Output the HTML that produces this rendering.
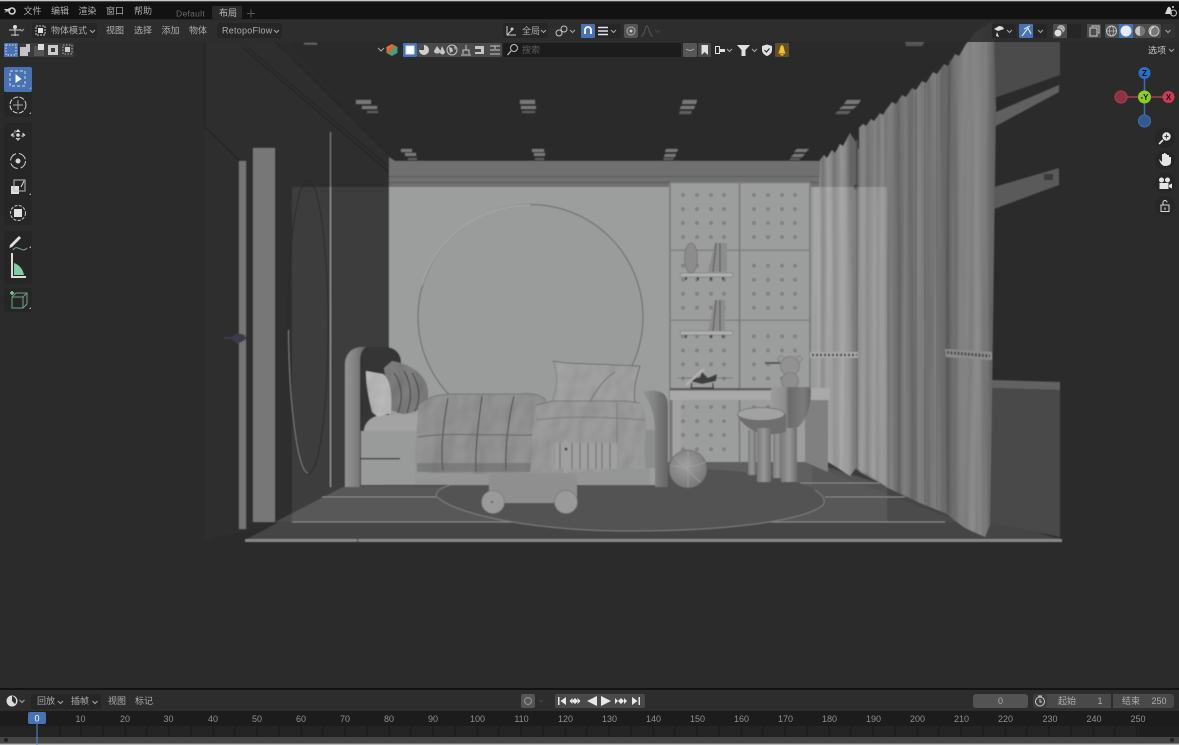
<!DOCTYPE html>
<html lang="zh"><head><meta charset="utf-8"><title>Blender</title>
<style>
html,body{margin:0;padding:0;background:#2b2b2b;overflow:hidden}
svg{display:block}
text{font-family:"Liberation Sans","Noto Sans CJK SC",sans-serif;font-size:9px;fill:#adadad}
.c{fill:none;stroke:#a8a8a8;stroke-width:1}
</style></head><body>
<svg width="1179" height="745" viewBox="0 0 1179 745" xmlns="http://www.w3.org/2000/svg">
<defs>
<filter id="b" x="-5%" y="-5%" width="110%" height="110%"><feGaussianBlur stdDeviation="0.45"/></filter>
<filter id="ib"><feGaussianBlur stdDeviation="0.3"/></filter>
<filter id="wr" x="0" y="0" width="100%" height="100%"><feTurbulence type="fractalNoise" baseFrequency=".05 .035" numOctaves="2" seed="4"/><feDiffuseLighting surfaceScale="2" lighting-color="#fff"><feDistantLight azimuth="225" elevation="60"/></feDiffuseLighting><feComposite in2="SourceGraphic" operator="arithmetic" k1="1.15"/></filter>
<filter id="pl" x="0" y="0" width="100%" height="100%"><feTurbulence type="fractalNoise" baseFrequency=".09 .003" numOctaves="2" seed="7"/><feDiffuseLighting surfaceScale="1.4" lighting-color="#fff"><feDistantLight azimuth="180" elevation="60"/></feDiffuseLighting><feComposite in2="SourceGraphic" operator="arithmetic" k1="1.16"/></filter>
<pattern id="dots" x="676" y="188" width="71" height="70.7" patternUnits="userSpaceOnUse">
<g fill="#8f9090" stroke="#6b6b6b" stroke-width=".7"><circle cx="7" cy="7" r="1.4"/><circle cx="21" cy="7" r="1.4"/><circle cx="35" cy="7" r="1.4"/><circle cx="48" cy="7" r="1.4"/><circle cx="7" cy="21" r="1.4"/><circle cx="21" cy="21" r="1.4"/><circle cx="35" cy="21" r="1.4"/><circle cx="48" cy="21" r="1.4"/><circle cx="7" cy="35" r="1.4"/><circle cx="21" cy="35" r="1.4"/><circle cx="35" cy="35" r="1.4"/><circle cx="48" cy="35" r="1.4"/><circle cx="7" cy="49" r="1.4"/><circle cx="21" cy="49" r="1.4"/><circle cx="35" cy="49" r="1.4"/><circle cx="48" cy="49" r="1.4"/></g></pattern>
<linearGradient id="c1" x1="812" x2="887" y1="0" y2="0" gradientUnits="userSpaceOnUse">
<stop offset="0" stop-color="#7a7a7a"/><stop offset=".05" stop-color="#8c8c8c"/><stop offset=".09" stop-color="#8e8e8e"/><stop offset=".14" stop-color="#6f6f6f"/><stop offset=".2" stop-color="#8f8f8f"/><stop offset=".26" stop-color="#8a8a8a"/><stop offset=".3" stop-color="#727272"/><stop offset=".38" stop-color="#929292"/><stop offset=".45" stop-color="#8a8a8a"/><stop offset=".5" stop-color="#767676"/><stop offset=".55" stop-color="#626262"/><stop offset=".59" stop-color="#5e5e5e"/><stop offset=".64" stop-color="#7f7f7f"/><stop offset=".7" stop-color="#828282"/><stop offset=".75" stop-color="#6f6f6f"/><stop offset=".82" stop-color="#868686"/><stop offset=".88" stop-color="#7a7a7a"/><stop offset=".94" stop-color="#858585"/><stop offset="1" stop-color="#6e6e6e"/>
</linearGradient>
<linearGradient id="c2" x1="885" x2="994" y1="0" y2="0" gradientUnits="userSpaceOnUse">
<stop offset="0" stop-color="#757575"/><stop offset=".06" stop-color="#7d7d7d"/><stop offset=".12" stop-color="#686868"/><stop offset=".18" stop-color="#7b7b7b"/><stop offset=".25" stop-color="#6c6c6c"/><stop offset=".32" stop-color="#7e7e7e"/><stop offset=".4" stop-color="#707070"/><stop offset=".47" stop-color="#7c7c7c"/><stop offset=".53" stop-color="#6a6a6a"/><stop offset=".58" stop-color="#5f5f5f"/><stop offset=".64" stop-color="#757575"/><stop offset=".72" stop-color="#818181"/><stop offset=".84" stop-color="#858585"/><stop offset=".93" stop-color="#7a7a7a"/><stop offset="1" stop-color="#5f5f5f"/>
</linearGradient>
<linearGradient id="post" x1="0" x2="1" y1="0" y2="0"><stop offset="0" stop-color="#929292"/><stop offset=".4" stop-color="#858585"/><stop offset="1" stop-color="#646464"/></linearGradient>
<linearGradient id="leg" x1="0" x2="1" y1="0" y2="0"><stop offset="0" stop-color="#7a7a7a"/><stop offset=".5" stop-color="#979797"/><stop offset="1" stop-color="#6e6e6e"/></linearGradient>
<linearGradient id="bowl" x1="0" x2="1" y1="0" y2="0"><stop offset="0" stop-color="#9c9c9c"/><stop offset=".35" stop-color="#8e8e8e"/><stop offset=".45" stop-color="#6a6a6a"/><stop offset=".8" stop-color="#7c7c7c"/><stop offset="1" stop-color="#666"/></linearGradient>
<radialGradient id="ball" cx=".45" cy=".4" r=".65"><stop offset="0" stop-color="#a0a0a0"/><stop offset="1" stop-color="#747474"/></radialGradient>
<linearGradient id="hex" x1="0" x2="1" y1="0" y2="1"><stop offset="0" stop-color="#e3a230"/><stop offset=".35" stop-color="#d9603a"/><stop offset=".65" stop-color="#3fa874"/><stop offset="1" stop-color="#3b85c4"/></linearGradient>
</defs>
<rect width="1179" height="745" fill="#2b2b2b"/>

<g filter="url(#b)">
<!-- ceiling -->
<polygon points="275,20 990,20 820,161 389,161" fill="#2a2929"/>
<!-- upper left wall -->
<polygon points="205,42 275,42 389,155 389,187 292,187 292,522 205,540" fill="#2f2e2e"/>
<polygon points="205,125 253,148 275,148 275,522 245,522 208,541 205,541" fill="#2d2d2d"/>
<line x1="205" y1="42" x2="205" y2="125" stroke="#272727"/>
<line x1="243" y1="48" x2="389" y2="172" stroke="#222" stroke-width="1"/>
<line x1="247" y1="47" x2="389" y2="167" stroke="#252525" stroke-width="1"/>
<line x1="275" y1="42" x2="389" y2="155" stroke="#272626" stroke-width="1"/>
<line x1="205" y1="127" x2="240" y2="161" stroke="#232323"/>
<!-- wall -->
<polygon points="389,157 395,161 822,161 822,187 389,187" fill="#6f6f6f"/>
<rect x="389" y="176" width="433" height="1" fill="#5b5b5b"/>
<rect x="389" y="182" width="433" height="1" fill="#565656"/>
<rect x="389" y="187" width="430" height="298" fill="#8f9090"/>
<!-- left wall -->
<polygon points="292,187 389,187 389,485 345,487 292,513" fill="#2e2d2e"/>
<rect x="275" y="187" width="17" height="335" fill="#2d2d2d"/>
<!-- floor -->
<polygon points="345,487 668,485 668,462 810,462 1062,540 245,540" fill="#454545"/>
<polygon points="345,486 668,486 668,463 805,463 960,522 275,522" fill="#4c4c4c"/>
<!-- right blocks -->
<polygon points="994,42 1060,42 1060,75 994,98" fill="#4c4c4c"/>
<polygon points="994,106 1035,85 1059,84 994,113" fill="#2a2a2a"/>
<polygon points="994,113 1059,85 1059,92 994,127" fill="#606060"/>
<polygon points="994,187 1059,168 1059,185 994,209" fill="#5a5a5a"/>
<rect x="1044" y="174" width="9" height="6" fill="#3a3a3a"/>
<polygon points="992,380 1060,382 1060,390 992,388" fill="#626262"/>
<polygon points="992,388 1060,390 1060,537 990,522" fill="#4a4a4a"/>
<polygon points="960,530 1060,538 1060,540 990,540" fill="#444"/>
<!-- curtains -->
<polygon filter="url(#pl)" points="820,160 824,155 827,158 832,150 835,153 840,144 843,146 850,133 856,142 859,150 860,465 868,474 887,487 860,472 856,468 850,476 838,468 828,462 818,455 813,400 815,300" fill="url(#c1)"/>
<polygon filter="url(#pl)" points="859,128 863,124 866,126 871,119 874,121 880,113 883,115 887,108 887,487 868,474 860,465" fill="url(#c1)"/>
<polygon filter="url(#pl)" points="886,110 892,102 896,104 902,95 906,97 912,88 916,90 922,81 926,83 933,72 937,74 944,64 948,66 955,54 959,56 966,44 976,32 994,20 996,110 992,400 990,525 985,537 965,528 945,513 920,503 886,487" fill="url(#c2)"/>
<path d="M950,60 C948,200 945,360 948,510" stroke="#555" stroke-width="1" fill="none"/>
<path d="M899,100 V492 M916,92 V498 M925,84 V503 M937,74 V508" stroke="#5c5c5c" stroke-width=".7"/>
<path d="M857,140 V470" stroke="#4d4d4d" stroke-width="2"/>
<rect x="854" y="185" width="4" height="5" fill="#3e3e3e"/>
<!-- overlay -->
<rect x="292" y="187" width="595" height="335" fill="#fff" opacity=".075"/>
<rect x="389" y="187" width="423" height="298" fill="#fff" opacity=".05"/>
<polygon points="813,187 887,187 887,487 868,474 856,468 850,476 828,462 818,455 813,400" fill="#fff" opacity=".13"/>
<!-- door -->
<rect x="253" y="148" width="22" height="374" fill="#777"/>
<rect x="239" y="161" width="7" height="368" fill="#747474"/>
<line x1="330.5" y1="132" x2="330.5" y2="187" stroke="#7c7c7c" stroke-width="1"/>
<line x1="330.5" y1="187" x2="330.5" y2="487" stroke="#a2a2a2" stroke-width="1"/>
<path d="M230,338 L237,333 L245,335 V340 L237,344 Z" fill="#3b3a48"/>
<line x1="224" y1="338" x2="246" y2="338" stroke="#3b3a48" stroke-width="2"/>
<!-- mirror -->
<ellipse cx="308" cy="327" rx="20" ry="147" fill="none" stroke="#2a2a2a" stroke-width="1"/>
<path d="M288.500,330 C289,400 297,472 308,473" fill="none" stroke="#7d7d7d" stroke-width="1"/>
<!-- floor lines -->
<path d="M292,522 H945" stroke="#8c8c8c" stroke-width="1"/>
<path d="M322,497 H436 M825,497 H905 M800,483 H880" stroke="#8c8c8c" stroke-width="1"/>
<rect x="245" y="539" width="817" height="3" fill="#888"/>
<rect x="357" y="539" width="1" height="3" fill="#333"/>
<!-- rug -->
<path d="M436,495 C440,488 446,486 450,485 H668 V468 C720,468 790,474 815,490 C825,497 826,502 822,506 C800,522 720,531 630,531 C540,531 456,515 436,495 Z" fill="#535353"/>
<path d="M450,485 C440,488 436,492 436,496 C456,516 540,531 630,531 C720,531 800,522 822,506 C826,502 825,497 815,490" fill="none" stroke="#7e7e7e" stroke-width="1"/>
<!-- circle -->
<circle cx="530.5" cy="317" r="112.5" fill="#9a9b9b" stroke="#686868" stroke-width="1"/>
<path d="M422,285 A112 112 0 0 1 530,205" fill="none" stroke="#b0b0b0" stroke-width="1"/>
<!-- panels -->
<rect x="670" y="183" width="140" height="279" fill="#9c9d9d"/>
<rect x="670" y="188" width="140" height="274" fill="url(#dots)"/>
<g fill="#808080">
<rect x="669" y="183" width="2" height="279"/><rect x="738.5" y="183" width="2" height="279"/><rect x="809" y="183" width="2" height="279"/>
<rect x="670" y="249.5" width="140" height="1.5"/><rect x="670" y="319.5" width="140" height="1.5"/><rect x="670" y="389" width="140" height="1.5"/>
<rect x="670" y="182" width="140" height="1.5"/></g>
<!-- shelves -->
<rect x="680" y="273" width="53" height="4" rx="2" fill="#b0b0b0" stroke="#6a6a6a" stroke-width=".5"/>
<rect x="685" y="277" width="2" height="3" fill="#444"/><rect x="697" y="277" width="2" height="3" fill="#444"/><rect x="710" y="277" width="2" height="3" fill="#444"/><rect x="722" y="277" width="2" height="3" fill="#444"/>
<rect x="680" y="331" width="53" height="4" rx="2" fill="#b0b0b0" stroke="#6a6a6a" stroke-width=".5"/>
<rect x="685" y="335" width="2" height="3" fill="#444"/><rect x="710" y="335" width="2" height="3" fill="#444"/><rect x="722" y="335" width="2" height="3" fill="#444"/>
<ellipse cx="691" cy="258" rx="6.5" ry="15" fill="#8c8c8c" stroke="#666" stroke-width=".6"/>
<path d="M708,272 L715,243 H727 V272 Z" fill="#8c8c8c"/><path d="M716,243 L713,272 M720,243 V272" stroke="#555"/>
<path d="M708,331 L715,300 H725 V331 Z" fill="#8c8c8c"/><path d="M716,300 L713,331 M720,300 V331" stroke="#555"/>
<!-- desk -->
<rect x="670" y="388" width="160" height="12" fill="#a9a9a9"/>
<rect x="670" y="388" width="102" height="2.500" fill="#5e5e5e"/>
<rect x="670" y="400" width="11" height="62" fill="#a3a3a3"/>
<rect x="670" y="400" width="2.500" height="62" fill="#777"/>
<polygon points="805,400 828,400 828,472 805,462" fill="#808080"/>
<!-- plane -->
<path d="M678,378 H733" stroke="#777" stroke-width="1"/>
<path d="M690,381 L700,377 L702,372 L708,378 L717,374 L716,381 L702,384 Z" fill="#3d3d3d"/>
<path d="M686,385 L697,375 L704,369" stroke="#b2b2b2" stroke-width="2.200" fill="none"/>
<path d="M692,383 L691,388 M713,383 V388 M691,388 H714" stroke="#2f2f2f" stroke-width="1.200" fill="none"/>
<!-- bear -->
<path d="M765,363 H780" stroke="#555" stroke-width="2"/>
<circle cx="781" cy="359" r="3.200" fill="#9a9a9a" stroke="#6a6a6a" stroke-width=".5"/><circle cx="799" cy="359" r="3.200" fill="#9a9a9a" stroke="#6a6a6a" stroke-width=".5"/>
<circle cx="790" cy="366" r="9.500" fill="#929292" stroke="#6e6e6e" stroke-width=".6"/>
<circle cx="790" cy="381" r="8.500" fill="#8e8e8e" stroke="#6e6e6e" stroke-width=".6"/>
<!-- chair -->
<rect x="748" y="430" width="8" height="45" fill="url(#leg)"/><rect x="773" y="430" width="9" height="48" fill="url(#leg)"/>
<path d="M771,389 L773,387 H809 C810,387 811,388 811,392 C811,415 800,427 796,428 V478 L781,482 V432 L771,425 Z" fill="url(#bowl)"/>
<rect x="781" y="428" width="16" height="54" rx="1" fill="url(#leg)"/>
<path d="M738,417 C748,432 765,438 786,432 V414 H738 Z" fill="#6e6e6e"/>
<ellipse cx="761" cy="414" rx="23.500" ry="6.500" fill="#a2a2a2" stroke="#6a6a6a" stroke-width=".7"/>
<rect x="757" y="428" width="14" height="54" rx="1" fill="url(#leg)"/>
<!-- ball -->
<circle cx="688" cy="469" r="19" fill="url(#ball)" stroke="#5e5e5e" stroke-width=".6"/>
<path d="M670,465 Q688,470 706,462 M688,451 V487 M675,458 L700,482" stroke="#a6a6a6" stroke-width=".6" fill="none"/>
<!-- bed -->
<path d="M360,347 H385 C395,347 401,354 401,362 L401,390 L364,432 H360 Z" fill="#343434"/>
<path d="M345,365 C345,354 352,347 362,347 H366 C361,350 360,356 360,362 V487 H345 Z" fill="url(#post)"/>
<rect x="361" y="431" width="60" height="54" fill="#999a9a"/>
<rect x="361" y="458" width="39" height="1.3" fill="#333"/>
<path d="M364,430 C365,422 372,415 385,415 H420 V431 H364 Z" fill="#a3a3a3"/>
<rect x="415" y="468" width="235" height="17" fill="#959696"/>
<path filter="url(#wr)" d="M384,368 L392,361 C415,365 428,378 428,393 C428,406 420,412 403,414 L390,410 Z" fill="#7a7a7a"/>
<path d="M394,373 Q406,390 398,413 M404,371 Q415,390 407,413 M412,373 Q424,392 415,411" stroke="#3f3f3f" stroke-width="1" fill="none"/>
<path filter="url(#wr)" d="M366,371 L383,374 C392,380 392,400 391,413 L378,417 L372,412 C368,395 366,385 366,371 Z" fill="#b4b4b4"/>
<!-- right pillow -->
<path filter="url(#wr)" d="M553,361 L566,363 L640,366 C636,378 633,392 635,402 H552 C556,390 560,378 553,361 Z" fill="#9e9e9e"/>
<path d="M553,361 L566,363 L640,366 C636,378 633,392 635,402" fill="none" stroke="#5f5f5f" stroke-width=".8"/>
<path d="M552,402 C556,390 560,378 553,361" fill="none" stroke="#777" stroke-width=".7"/>
<path d="M590,402 C597,388 605,378 615,372" stroke="#707070" stroke-width="1" fill="none"/>
<!-- foot post -->
<path d="M643,392 C648,390 658,390 664,394 C668,398 668,404 668,410 V487 H655 V430 C655,415 650,402 643,392 Z" fill="url(#post)"/>
<rect x="645" y="430" width="10" height="38" fill="#8c8d8d"/>
<!-- duvet -->
<path filter="url(#wr)" d="M419,405 C425,397 440,394 455,394 L520,394 C535,392 542,396 546,400 L537,465 L530,472 L480,474 L430,473 L416,468 C415,450 417,425 419,405 Z" fill="#8f8f8f"/>
<path d="M448,398 C444,420 440,450 443,470 M482,396 C478,425 475,450 476,472 M514,396 C508,420 505,450 506,470" stroke="#454545" stroke-width="1" fill="none"/>
<path d="M418,437 C450,432 500,436 535,435" stroke="#666" stroke-width="1" fill="none"/>
<path d="M419,405 C425,397 440,394 455,394 L520,394 C535,392 542,396 546,400" fill="none" stroke="#6e6e6e" stroke-width=".8"/>
<rect x="417" y="463" width="120" height="9" fill="#666" opacity=".5"/>
<!-- blanket -->
<path filter="url(#wr)" d="M537,405 L552,401 H625 L640,403 C645,410 646,420 646,428 L644,465 L610,472 H530 C533,450 530,425 537,405 Z" fill="#989898"/>
<path d="M537,405 L552,401 H625 L640,403" fill="none" stroke="#6c6c6c" stroke-width=".8"/>
<path d="M617,403 V445 M537,420 C570,415 620,418 645,420" stroke="#7c7c7c" stroke-width="1" fill="none"/>
<rect x="555" y="443" width="62" height="26" fill="#a0a0a0"/>
<path d="M560,443 V469 M566,443 V469 M572,443 V469 M580,443 V469 M588,443 V469 M596,443 V469 M602,443 V469 M610,443 V469" stroke="#5a5a5a" stroke-width=".8"/>
<rect x="564" y="440" width="4" height="33" fill="#a0a0a0"/>
<circle cx="566" cy="449" r="1.5" fill="#444"/>
<!-- cart -->
<rect x="489" y="473" width="88" height="30" rx="6" fill="#8f8f8f"/>
<circle cx="493" cy="502" r="11.5" fill="#9a9a9a" stroke="#6f6f6f" stroke-width=".6"/>
<circle cx="566" cy="502" r="11.5" fill="#9a9a9a" stroke="#6f6f6f" stroke-width=".6"/>
<circle cx="492" cy="502" r="1" fill="#444"/>
<!-- ties -->
<path d="M810,352 H858 V358 H810 Z" fill="#a8a8a8"/>
<path d="M812,355 H857" stroke="#4a4a4a" stroke-width="2.500" stroke-dasharray="2 2"/>
<path d="M945,349 L992,352 V360 L946,357 Z" fill="#8c8c8c"/>
<path d="M947,352.500 L990,356" stroke="#4a4a4a" stroke-width="3" stroke-dasharray="2 1.500"/>
<!-- ceiling lights -->
<g fill="#787878">
<rect x="356" y="100" width="15" height="4"/><rect x="362" y="106" width="15" height="3"/><rect x="367" y="111" width="11" height="2" fill="#5e5e5e"/>
<rect x="520" y="100" width="15" height="4"/><rect x="521" y="106" width="15" height="3"/><rect x="522" y="111" width="13" height="2" fill="#5e5e5e"/>
<polygon points="683,100 697,100 696,104 682,104"/><polygon points="681,106 695,106 694,109 680,109"/><polygon points="680,111 692,111 691,114 679,114" fill="#5e5e5e"/>
<polygon points="847,100 861,100 858,104 844,104"/><polygon points="843,106 857,106 853,109 839,109"/><polygon points="838,111 851,111 848,114 835,114" fill="#5e5e5e"/>
<rect x="401" y="149" width="11" height="3"/><rect x="405" y="153" width="11" height="3"/><rect x="408" y="158" width="9" height="2" fill="#5e5e5e"/>
<rect x="532" y="149" width="12" height="3"/><rect x="534" y="153" width="11" height="3"/><rect x="535" y="158" width="9" height="2" fill="#5e5e5e"/>
<polygon points="666,149 678,149 677,152 665,152"/><polygon points="665,154 676,154 675,157 664,157"/><polygon points="664,158 674,158 673,160 663,160" fill="#5e5e5e"/>
<polygon points="797,149 809,149 806,152 794,152"/><polygon points="794,154 805,154 802,157 791,157"/><polygon points="791,158 801,158 799,160 789,160" fill="#5e5e5e"/>
<rect x="304" y="43" width="13" height="1.5" fill="#6a6a6a"/>
<polygon points="905,41 925,41 922,46 906,46" fill="#555"/>
</g>
</g>

<!-- header bars -->
<rect x="0" y="0" width="1179" height="19" fill="#121212"/>
<rect x="0" y="0" width="1179" height="1.3" fill="#c8c8c8"/>
<rect x="0" y="19" width="1179" height="1" fill="#262626"/>
<rect x="0" y="20" width="1179" height="22" fill="#2d2d2d" opacity=".88"/>
<rect x="0" y="42" width="78" height="16" fill="#2b2b2b"/>
<rect x="371" y="42" width="422" height="18" fill="#2b2b2b" opacity=".75"/>

<g filter="url(#ib)">
<!-- top menu -->
<rect x="212" y="6" width="30" height="13" rx="2" fill="#2b2b2b"/>
<g fill="#d0d0d0"><circle cx="12" cy="11" r="3" fill="none" stroke="#d0d0d0" stroke-width="1.6"/><path d="M4,13 L9,8 L11,10 L6,12 Z M4,9 L9,9 V10.5 H5 Z"/></g>
<text x="23.5" y="14">文件</text><text x="51" y="14">编辑</text><text x="78.500" y="14">渲染</text><text x="106" y="14">窗口</text><text x="134" y="14">帮助</text>
<text x="176" y="16.500" style="fill:#6b6b6b;font-size:8.500px;letter-spacing:.3px">Default</text>
<text x="219" y="16" style="fill:#bdbdbd">布局</text>
<path d="M247,13.500 H255 M251,9.500 V17.500" stroke="#555" stroke-width="1"/>
<!-- top right -->
<path d="M1167,9 C1168,6 1170,6 1171,9 L1172,14 H1165 Z" fill="#d8d8d8"/><circle cx="1173" cy="7" r="1" fill="#d8d8d8"/><circle cx="1173.500" cy="13" r="3" fill="none" stroke="#bbb"/>

<!-- row 2 left -->
<g stroke="#d0d0d0" fill="none" stroke-width="1"><path d="M9,30 H21 M15,26 V36 M11,35 H19"/></g><circle cx="15" cy="27" r="2" fill="#ddd"/>
<path class="c" d="M20,29 l2,2 l2,-2"/>
<rect x="32" y="23" width="65" height="15" rx="2" fill="#282828"/>
<rect x="36" y="26" width="9" height="9" fill="none" stroke="#c8c8c8" stroke-dasharray="2 1"/><rect x="38" y="28" width="5" height="5" fill="#ddd"/>
<text x="51" y="33.500">物体模式</text><path class="c" d="M90,30 l2.500,2.500 l2.500,-2.500"/>
<text x="106" y="33.500">视图</text><text x="134" y="33.500">选择</text><text x="161.500" y="33.500">添加</text><text x="189" y="33.500">物体</text>
<rect x="217" y="23" width="65" height="15" rx="2" fill="#282828"/>
<text x="222" y="33.500" style="letter-spacing:.25px;font-size:9px">RetopoFlow</text><path class="c" d="M274,30 l2.500,2.500 l2.500,-2.500"/>

<!-- select modes -->
<rect x="4" y="43" width="14" height="14" fill="#4772b3"/><rect x="6" y="45" width="10" height="10" fill="none" stroke="#e6e6e6" stroke-dasharray="1.5 1.5"/>
<rect x="19" y="43" width="55" height="14" rx="1" fill="#3a3a3a"/>
<path d="M20,47 h6 v-3 h4 v8 h-2 v4 h-8 z" fill="#c4c4c4"/>
<path d="M34,46 h6 v4 h4 v6 h-10 z" fill="#555"/><rect x="38" y="44" width="6" height="6" fill="#ddd"/>
<rect x="48" y="45" width="10" height="10" fill="#ccc"/><rect x="51" y="48" width="4" height="4" fill="#3a3a3a"/>
<rect x="63" y="45" width="9" height="9" fill="none" stroke="#aaa" stroke-dasharray="1.500 1.500"/><rect x="65" y="47" width="5" height="5" fill="#ccc"/>

<!-- row 2 center -->
<rect x="503" y="23" width="45" height="15" rx="2" fill="#252525"/>
<path d="M507,26 V35 H516 M507,35 L513,29" stroke="#ccc" fill="none"/><circle cx="512" cy="29" r="1.5" fill="#ccc"/>
<text x="522" y="34">全局</text><path class="c" d="M541,30 l2.500,2.500 l2.500,-2.500"/>
<circle cx="559" cy="33" r="3" fill="none" stroke="#c5c5c5"/><circle cx="564" cy="29" r="3" fill="none" stroke="#c5c5c5"/><path class="c" d="M570,30 l2.500,2.500 l2.500,-2.500"/>
<rect x="581" y="24" width="14" height="14" rx="1" fill="#4772b3"/>
<path d="M585,34 V30 a3,3 0 0 1 6,0 V34" fill="none" stroke="#eee" stroke-width="2"/>
<rect x="596" y="24" width="25" height="14" fill="#252525"/>
<path d="M598,27.500 H608 M598,31 H608 M598,34.500 H608" stroke="#e6e6e6" stroke-width="1.500"/><path class="c" d="M611,30 l2.500,2.500 l2.500,-2.500"/>
<rect x="624" y="24" width="14" height="14" rx="2" fill="#555"/><circle cx="631" cy="31" r="4" fill="none" stroke="#aaa"/><circle cx="631" cy="31" r="1.500" fill="#ccc"/>
<path d="M641,36 C645,36 645,26 647,26 C649,26 649,36 653,36" fill="none" stroke="#555"/><path d="M655,30 l2.500,2.500 l2.500,-2.500" fill="none" stroke="#444"/>

<!-- row 3 center -->
<path class="c" d="M378,48 l3,3 l3,-3"/>
<polygon points="392,44 397.500,47 397.500,53 392,56 386.500,53 386.500,47" fill="url(#hex)"/>
<rect x="403" y="43" width="14" height="14" rx="1" fill="#4772b3"/><rect x="406" y="46" width="8" height="8" fill="#fff" stroke="#dfe8f5"/>
<rect x="417" y="43" width="85" height="14" rx="2" fill="#4a4a4a"/>
<circle cx="424" cy="50" r="5" fill="#cfcfcf"/><path d="M424,50 V45 A5,5 0 0 0 419,50 Z" fill="#4a4a4a"/>
<path d="M437,46 L440,50 C442,54 434,55 434,51 Z M442,46 L445,52 A2.500,2.500 0 0 1 440,52" fill="#c5c5c5"/>
<circle cx="452" cy="50" r="5" fill="none" stroke="#c5c5c5"/><path d="M449,47 l3,1 l1,3 l-3,2 z M454,46 l2,2 l-1,2 z" fill="#c5c5c5"/>
<path d="M463,54 V50 H469 V54 M466,50 V45 M461,55 H471" stroke="#c5c5c5" fill="none"/>
<path d="M475,46 H484 V54 H475 Z" fill="#c5c5c5"/><rect x="475" y="49" width="6" height="3" fill="#4a4a4a"/>
<path d="M490,46 H500 M495,46 V49 M490,50 H500 M490,54 H500" stroke="#c5c5c5" fill="none"/>
<rect x="503" y="43" width="178" height="14" rx="2" fill="#1c1c1c"/>
<circle cx="514" cy="48" r="3.500" fill="none" stroke="#c0c0c0"/><path d="M511,51 L507.500,55" stroke="#c0c0c0" stroke-width="1.300"/>
<text x="522" y="53" style="fill:#5c5c5c">搜索</text>
<rect x="683" y="43" width="14" height="14" rx="1" fill="#575757"/><path d="M686,49 q4,3 8,0" fill="none" stroke="#aaa"/>
<rect x="698" y="43" width="13" height="14" rx="1" fill="#474747"/><path d="M701.500,45 H708 V55 L704.700,52 L701.500,55 Z" fill="#e0e0e0"/>
<path d="M715,46 H720 V49 H725 V52 H720 V54 H715 Z" fill="#e0e0e0"/><rect x="716" y="47" width="3" height="6" fill="#2b2b2b"/>
<path class="c" d="M727,49 l2.500,2.500 l2.500,-2.500"/>
<polygon points="737,45 750,45 745.500,50 745.500,56 741.500,56 741.500,50" fill="#e0e0e0"/>
<path class="c" d="M752,49 l2.500,2.500 l2.500,-2.500"/>
<path d="M762,46 L767,44.500 L772,46 V50 C772,53 769,55.500 767,56 C765,55.500 762,53 762,50 Z" fill="#e0e0e0"/><path d="M764.500,50 l2,2 l3,-3.500" fill="none" stroke="#2b2b2b" stroke-width="1.200"/>
<rect x="775" y="43" width="14" height="14" rx="1" fill="#5e4f2c"/>
<path d="M778,53.500 C780,52 779.500,45.500 782,45 C784.500,45.500 784,52 786,53.500 Z" fill="#f6c026"/><rect x="780.500" y="54" width="3" height="1.500" fill="#f6c026"/>

<!-- right tools -->
<rect x="992" y="24" width="24" height="14" fill="#252525"/>
<path d="M994,29 l5,-3 q4,0 5,3 l-6,2 z" fill="#dedede"/><path d="M997,32 l2,5 l-3,-1 z" fill="#dedede"/>
<path class="c" d="M1007,30 l2.500,2.500 l2.500,-2.500"/>
<rect x="1019" y="24" width="14" height="14" rx="1" fill="#4772b3"/><path d="M1022,36 L1028,28 L1031,34 M1024,29 L1030,26" fill="none" stroke="#e2e8f2" stroke-width="1.100"/>
<rect x="1034" y="24" width="13" height="14" fill="#252525"/><path class="c" d="M1038,30 l2.500,2.500 l2.500,-2.500"/>
<rect x="1053" y="24" width="14" height="14" rx="1" fill="#4d4d4d"/><circle cx="1061" cy="29" r="4" fill="#aaa"/><circle cx="1058" cy="33" r="4" fill="#ddd" stroke="#4d4d4d"/>
<rect x="1067" y="24" width="14" height="14" fill="#282828"/>
<rect x="1087" y="24" width="14" height="14" rx="1" fill="#4d4d4d"/><rect x="1090" y="28" width="7" height="8" fill="none" stroke="#ccc"/><path d="M1092,27 V26 H1099 V33 H1098" fill="none" stroke="#ccc"/>
<rect x="1105" y="24" width="56" height="14" rx="2" fill="#4d4d4d"/>
<circle cx="1111.500" cy="31" r="5" fill="none" stroke="#c5c5c5"/><ellipse cx="1111.500" cy="31" rx="2" ry="5" fill="none" stroke="#c5c5c5" stroke-width=".7"/><path d="M1106.500,31 H1116.500" stroke="#c5c5c5" stroke-width=".7"/>
<rect x="1119" y="24" width="14" height="14" fill="#4772b3"/><circle cx="1126" cy="31" r="5.500" fill="#e5ecf8"/>
<circle cx="1140" cy="31" r="5" fill="#c5c5c5"/><path d="M1140,26 A5,5 0 0 1 1140,36 Z" fill="#777"/>
<circle cx="1154" cy="31" r="5" fill="#777" stroke="#c5c5c5"/><path d="M1151,34 A5,5 0 0 1 1154,27" fill="none" stroke="#ddd"/>
<rect x="1162" y="24" width="13" height="14" rx="2" fill="#333"/><path class="c" d="M1165.500,30 l2.500,2.500 l2.500,-2.500"/>
<rect x="1143" y="43" width="35" height="14" rx="2" fill="#2a2a2a"/>
<text x="1148" y="53.500" style="fill:#c4c4c4">选项</text><path class="c" d="M1169,49 l2.500,2.500 l2.500,-2.500"/>

<!-- gizmo -->
<path d="M1144.500,73 V121" stroke="#3e6ea8" stroke-width="1.500"/><path d="M1121,97 H1168" stroke="#a83d50" stroke-width="1.500"/>
<circle cx="1144.500" cy="73" r="6" fill="#2b70c6"/><text x="1144.500" y="76" text-anchor="middle" style="fill:#111;font-size:8px;font-weight:bold">Z</text>
<circle cx="1121" cy="97" r="6" fill="#8d3344" stroke="#b53c52"/>
<circle cx="1144.500" cy="121" r="6" fill="#305a90" stroke="#3e70b0"/>
<circle cx="1168.500" cy="97" r="6" fill="#d03a53"/><text x="1168.500" y="100" text-anchor="middle" style="fill:#111;font-size:8px;font-weight:bold">X</text>
<circle cx="1144.500" cy="97" r="6.500" fill="#8ccf1d"/><text x="1144.500" y="100" text-anchor="middle" style="fill:#111;font-size:8px;font-weight:bold">-Y</text>
<!-- nav -->
<g fill="#252525"><circle cx="1165" cy="138" r="10"/><circle cx="1165" cy="160" r="10"/><circle cx="1165" cy="183" r="10"/><circle cx="1165" cy="206" r="10"/></g>
<circle cx="1166.500" cy="136.500" r="4.200" fill="#e0e0e0"/><path d="M1163,140 L1159,144" stroke="#e0e0e0" stroke-width="1.800"/><path d="M1164.500,136.500 H1168.500 M1166.500,134.500 V138.500" stroke="#333"/>
<path d="M1159,159 L1162,162 V154 H1164 V153 H1165.500 V154 H1167 V155 H1169 V157 H1171 V162 C1171,165 1168,166 1165,166 C1162,166 1160,163 1159,159 Z" fill="#e4e4e4"/>
<circle cx="1161.500" cy="180" r="2.500" fill="#e4e4e4"/><circle cx="1167.500" cy="180" r="2.500" fill="#e4e4e4"/><rect x="1159.500" y="183" width="9" height="6" fill="#e4e4e4"/><path d="M1169,185 L1172,183.500 V188.500 L1169,187 Z" fill="#e4e4e4"/>
<rect x="1161" y="205" width="8" height="6.500" fill="none" stroke="#dcdcdc"/><path d="M1163,205 V202.500 a2,2 0 0 1 4,0" fill="none" stroke="#dcdcdc"/><rect x="1164.500" y="207.500" width="1" height="2.500" fill="#dcdcdc"/>

<!-- left toolbar -->
<rect x="4" y="67" width="28" height="25" rx="2" fill="#4772b3"/>
<rect x="4" y="92" width="28" height="25" fill="#272727"/>
<rect x="4" y="123" width="28" height="102" rx="2" fill="#272727"/>
<rect x="4" y="231" width="28" height="53" rx="2" fill="#272727"/>
<rect x="4" y="288" width="28" height="24" rx="2" fill="#272727"/>
<rect x="10" y="71" width="15" height="15" fill="none" stroke="#d9d9d9" stroke-dasharray="3 2"/>
<path d="M15.500,74 L21.500,79 L15.500,83 Z" fill="#f4f4f4"/>
<circle cx="18" cy="105" r="8" fill="none" stroke="#d2d2d2" stroke-dasharray="5 1.500"/><path d="M18,100 V110 M13,105 H23" stroke="#aaa"/>
<g fill="#d8d8d8"><path d="M18,129 l2.500,3 h-5 z M18,141 l2.500,-3 h-5 z M10.500,135 l3,-2.500 v5 z M25.500,135 l-3,-2.500 v5 z"/><circle cx="18" cy="135" r="1.800"/></g>
<path d="M15,133.500 V130 M21,136 H24 M15,136 H12 M18,138 V141" stroke="#999"/>
<circle cx="18" cy="161" r="7.500" fill="none" stroke="#cfcfcf" stroke-dasharray="9 3"/><circle cx="18" cy="161" r="2.500" fill="#d8d8d8"/>
<rect x="11" y="186" width="8" height="8" fill="#dedede"/><rect x="14" y="180" width="11" height="11" fill="none" stroke="#bbb"/><path d="M21,187 L24,181" stroke="#ddd"/>
<circle cx="18" cy="213" r="7.500" fill="none" stroke="#ccc" stroke-dasharray="3 1.500"/><rect x="14" y="209" width="8" height="8" fill="#e2e2e2"/>
<path d="M10,245 L19,236 L21,238 L12,247 L9.500,248 Z" fill="#e2e2e2"/><path d="M13,250 C17,243 22,254 27,248" fill="none" stroke="#6fa892" stroke-width="1"/>
<path d="M12,253 V277 H26" fill="none" stroke="#dcdcdc" stroke-width="2"/><path d="M14,263 C20,265 23,270 24,275 H14 Z" fill="#7ccca4"/>
<path d="M12,295 V291 M10,293 H14" stroke="#7fd0a5" stroke-width="1.500"/>
<path d="M12,297 H23 L27,293 M12,297 V308 H23 V297 M23,308 L27,304 V293 H16 L12,297" fill="none" stroke="#6fa28a" stroke-width="1"/>
<path d="M29,89 h2 v-2 z M29,114 h2 v-2 z M29,195 h2 v-2 z M29,248 h2 v-2 z M29,309 h2 v-2 z" fill="#aaa"/>
</g>

<!-- timeline -->
<rect x="0" y="688" width="1179" height="2" fill="#141414"/>
<rect x="0" y="690" width="1179" height="21" fill="#2d2d2d"/>
<rect x="0" y="711" width="1179" height="15" fill="#1c1c1c"/>
<rect x="0" y="726" width="1179" height="11" fill="#242424"/>
<g stroke="#181818" stroke-width="1">
<path d="M60,726V737 M81,726V737 M103,726V737 M125,726V737 M147,726V737 M169,726V737 M191,726V737 M213,726V737 M235,726V737 M257,726V737 M279,726V737 M301,726V737 M323,726V737 M345,726V737 M367,726V737 M389,726V737 M411,726V737 M433,726V737 M455,726V737 M477,726V737 M499,726V737 M521,726V737 M543,726V737 M565,726V737 M587,726V737 M609,726V737 M631,726V737 M653,726V737 M675,726V737 M697,726V737 M719,726V737 M741,726V737 M763,726V737 M785,726V737 M807,726V737 M829,726V737 M851,726V737 M873,726V737 M895,726V737 M917,726V737 M939,726V737 M961,726V737 M983,726V737 M1005,726V737 M1027,726V737 M1049,726V737 M1071,726V737 M1093,726V737 M1115,726V737 M1137,726V737"/>
</g>
<rect x="1139" y="726" width="40" height="11" fill="#1e1e1e"/>
<rect x="0" y="737" width="1179" height="6" fill="#454545"/>
<circle cx="6" cy="740" r="2" fill="#222"/><circle cx="1172" cy="740" r="2" fill="#222"/>
<rect x="0" y="743.500" width="1179" height="1.500" fill="#bbb"/>
<g filter="url(#ib)">
<circle cx="12" cy="701" r="5.500" fill="#dcdcdc"/><path d="M12,696 A5,5 0 0 1 15,704 L12,701 Z" fill="#2d2d2d"/>
<path class="c" d="M19.500,700 l2.500,2.500 l2.500,-2.500"/>
<rect x="31" y="694" width="70" height="15" rx="2" fill="#282828"/>
<text x="37" y="704">回放</text><path class="c" d="M58,701 l2.500,2.500 l2.500,-2.500"/>
<text x="71" y="704">插帧</text><path class="c" d="M92.500,701 l2.500,2.500 l2.500,-2.500"/>
<text x="108" y="704">视图</text><text x="135" y="704">标记</text>
<rect x="521" y="694" width="14" height="14" rx="2" fill="#555"/><circle cx="528" cy="701" r="3.500" fill="none" stroke="#8a8a8a" stroke-width="1.300"/>
<path d="M539,700 l2,2 l2,-2" fill="none" stroke="#444"/>
<rect x="555" y="694" width="90" height="14" rx="2" fill="#4a4a4a"/>
<g fill="#e8e8e8">
<path d="M558,697 h1.500 v8 h-1.500 z M566,697 L560.500,701 L566,705 Z"/>
<path d="M570,701 l3,-3 v6 z M575.500,698 l3,3 l-3,3 l-3,-3 z M581,701 l-3,-3 v6 z" transform="translate(-.500,0)"/>
<path d="M597,696 L587,701 L597,706 Z"/>
<path d="M601,696 L611,701 L601,706 Z"/>
<path d="M615,698 l3,3 l-3,3 z M621,698 l3,3 l-3,3 l-3,-3 z M627,701 l-3,-3 v6 z"/>
<path d="M632,697 L637.500,701 L632,705 Z M638.500,697 h1.500 v8 h-1.500 z"/>
</g>
<rect x="973" y="694" width="55" height="14" rx="3" fill="#525252"/><text x="1000.500" y="704" text-anchor="middle">0</text>
<rect x="1033" y="694" width="141" height="14" rx="3" fill="#4a4a4a"/>
<rect x="1033" y="694" width="14" height="14" rx="3" fill="#3c3c3c"/>
<circle cx="1040" cy="701.500" r="4.500" fill="none" stroke="#ccc"/><path d="M1040,699 V702 H1042 M1038,696 H1042" stroke="#ccc" fill="none"/>
<rect x="1111" y="694" width="2" height="14" fill="#2d2d2d"/>
<text x="1058" y="704">起始</text><text x="1100" y="704" text-anchor="middle">1</text>
<text x="1122" y="704">结束</text><text x="1159" y="704" text-anchor="middle">250</text>
<g text-anchor="middle">
<text x="80.500" y="722" style="fill:#8f8f8f">10</text><text x="125" y="722" style="fill:#8f8f8f">20</text><text x="168.500" y="722" style="fill:#8f8f8f">30</text><text x="213" y="722" style="fill:#8f8f8f">40</text><text x="257" y="722" style="fill:#8f8f8f">50</text><text x="301" y="722" style="fill:#8f8f8f">60</text><text x="345" y="722" style="fill:#8f8f8f">70</text><text x="389" y="722" style="fill:#8f8f8f">80</text><text x="433" y="722" style="fill:#8f8f8f">90</text><text x="477.500" y="722" style="fill:#8f8f8f">100</text><text x="521.500" y="722" style="fill:#8f8f8f">110</text><text x="565.500" y="722" style="fill:#8f8f8f">120</text><text x="609.500" y="722" style="fill:#8f8f8f">130</text><text x="653.500" y="722" style="fill:#8f8f8f">140</text><text x="697.500" y="722" style="fill:#8f8f8f">150</text><text x="741.500" y="722" style="fill:#8f8f8f">160</text><text x="785.500" y="722" style="fill:#8f8f8f">170</text><text x="829.500" y="722" style="fill:#8f8f8f">180</text><text x="873.500" y="722" style="fill:#8f8f8f">190</text><text x="917.500" y="722" style="fill:#8f8f8f">200</text><text x="961.500" y="722" style="fill:#8f8f8f">210</text><text x="1005.500" y="722" style="fill:#8f8f8f">220</text><text x="1050" y="722" style="fill:#8f8f8f">230</text><text x="1094" y="722" style="fill:#8f8f8f">240</text><text x="1138" y="722" style="fill:#8f8f8f">250</text>
</g>
<rect x="36.500" y="723" width="1" height="22" fill="#5e8bc9"/>
<rect x="28" y="712" width="18" height="12" rx="2" fill="#4772b3"/>
<text x="37" y="721.500" text-anchor="middle" style="fill:#fff">0</text>
</g>
</svg>
</body></html>
